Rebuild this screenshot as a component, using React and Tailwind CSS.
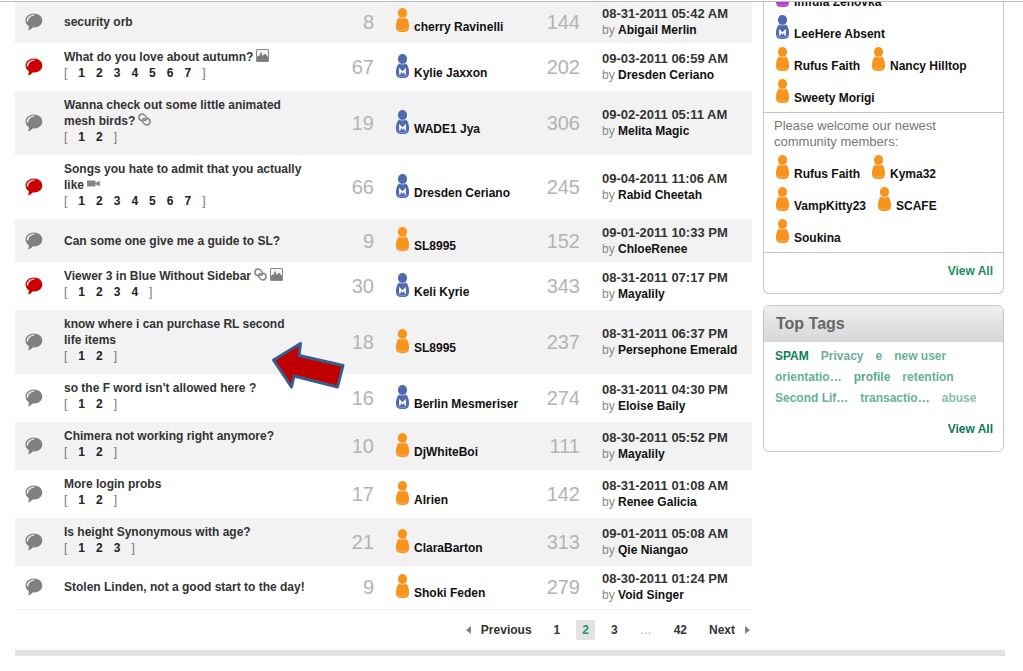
const TOPICS = [
  { title: 'security orb', replies: 8, author: 'cherry Ravinelli', views: 144, date: '08-31-2011 05:42 AM', by: 'Abigail Merlin' },
  { title: 'What do you love about autumn?', icons: ['image'], pages: 7, hot: true, replies: 67, author: 'Kylie Jaxxon', mod: true, views: 202, date: '09-03-2011 06:59 AM', by: 'Dresden Ceriano' },
  { title: 'Wanna check out some little animated mesh birds?', icons: ['link'], pages: 2, replies: 19, author: 'WADE1 Jya', mod: true, views: 306, date: '09-02-2011 05:11 AM', by: 'Melita Magic' },
  { title: 'Songs you hate to admit that you actually like', icons: ['video'], pages: 7, hot: true, replies: 66, author: 'Dresden Ceriano', mod: true, views: 245, date: '09-04-2011 11:06 AM', by: 'Rabid Cheetah' },
  { title: 'Can some one give me a guide to SL?', replies: 9, author: 'SL8995', views: 152, date: '09-01-2011 10:33 PM', by: 'ChloeRenee' },
  { title: 'Viewer 3 in Blue Without Sidebar', icons: ['link', 'image'], pages: 4, hot: true, replies: 30, author: 'Keli Kyrie', mod: true, views: 343, date: '08-31-2011 07:17 PM', by: 'Mayalily' },
  { title: 'know where i can purchase RL second life\u00a0items', pages: 2, replies: 18, author: 'SL8995', views: 237, date: '08-31-2011 06:37 PM', by: 'Persephone Emerald' },
  { title: "so the F word isn't allowed here ?", pages: 2, replies: 16, author: 'Berlin Mesmeriser', mod: true, views: 274, date: '08-31-2011 04:30 PM', by: 'Eloise Baily' },
  { title: 'Chimera not working right anymore?', pages: 2, replies: 10, author: 'DjWhiteBoi', views: 111, date: '08-30-2011 05:52 PM', by: 'Mayalily' },
  { title: 'More login probs', pages: 2, replies: 17, author: 'Alrien', views: 142, date: '08-31-2011 01:08 AM', by: 'Renee Galicia' },
  { title: 'Is height Synonymous with age?', pages: 3, replies: 21, author: 'ClaraBarton', views: 313, date: '09-01-2011 05:08 AM', by: 'Qie Niangao' },
  { title: 'Stolen Linden, not a good start to the day!', replies: 9, author: 'Shoki Feden', views: 279, date: '08-30-2011 01:24 PM', by: 'Void Singer' },
];

const ONLINE = [
  { name: 'Imfula Zenovka', color: '#b93cc0' },
  { name: 'LeeHere Absent', mod: true },
  { name: 'Rufus Faith' },
  { name: 'Nancy Hilltop' },
  { name: 'Sweety Morigi' },
];

const NEWEST = [
  { name: 'Rufus Faith' },
  { name: 'Kyma32' },
  { name: 'VampKitty23' },
  { name: 'SCAFE' },
  { name: 'Soukina' },
];

const TAGS = [
  { label: 'SPAM', tone: 'text-[#0f7f58]' },
  { label: 'Privacy', tone: 'text-[#66b096]' },
  { label: 'e', tone: 'text-[#66b096]' },
  { label: 'new user', tone: 'text-[#66b096]' },
  { label: 'orientatio…', tone: 'text-[#66b096]' },
  { label: 'profile', tone: 'text-[#5aa98d]' },
  { label: 'retention', tone: 'text-[#66b096]' },
  { label: 'Second Lif…', tone: 'text-[#66b096]' },
  { label: 'transactio…', tone: 'text-[#66b096]' },
  { label: 'abuse', tone: 'text-[#86c0ab]' },
];

const Bubble = ({ hot }) => (
  <svg width="18" height="18" viewBox="0 0 18 18" aria-label={hot ? 'Hot topic' : 'Topic'} className="block">
    <path
      d="M9 .6C13.800 .6 17.300 3.500 17.300 7.600S13.800 14.600 9.300 14.600C8.600 14.600 8 14.600 7.400 14.400 6.200 16.200 4.700 17 2.800 17.300 3.600 16.300 3.900 15 3.800 13.200 1.700 12 .5 10 .5 7.600.5 3.500 4.200.6 9 .6Z"
      fill={hot ? '#cc0000' : '#808080'}
    />
    <path d="M2 8.200C1.800 4.200 5 1.900 9.600 1.900 5.800 2.800 3.200 4.800 3 8.200Z" fill="#fff" stroke="#fff" strokeWidth=".4" />
  </svg>
);

const Person = ({ mod, color }) => {
  const fill = color || (mod ? '#4f69b0' : '#f7941d');
  const light = color ? '#d77fdb' : mod ? '#8b9cd0' : '#fbb562';
  return (
    <svg width="13" height="24" viewBox="0 0 13 24" aria-hidden="true" className="mb-[3px] block shrink-0">
      <path d="M3 9.500H10C12 11.500 13 14.500 13 18 13 22.500 11.800 24 6.500 24S0 22.500 0 18C0 14.500 1 11.500 3 9.500Z" fill={fill} />
      <ellipse cx="6.500" cy="5" rx="4.600" ry="5" fill={fill} />
      <path d="M2.500 8.800C4 10.800 9 10.800 10.500 8.800" fill="none" stroke="#fff" strokeOpacity=".55" strokeWidth=".9" />
      {mod ? (
        <>
          <path d="M1.500 20.500C2.500 23.500 10.500 23.500 11.500 20.500" fill="none" stroke={light} strokeWidth="1" />
          <path d="M3.900 20.500V15.800L6.500 18.600 9.100 15.800V20.500" fill="none" stroke="#fff" strokeWidth="1.600" />
        </>
      ) : (
        <path d="M2 21C3.500 22.800 9.500 22.800 11 21" fill="none" stroke={light} strokeWidth=".8" />
      )}
    </svg>
  );
};

const Attachment = ({ type }) => {
  if (type === 'image') {
    return (
      <svg width="13" height="13" viewBox="0 0 13 13" aria-label="Image" className="ml-[3px] inline-block align-[-1px]">
        <rect x=".5" y=".5" width="12" height="12" rx=".5" fill="#f4f4f4" stroke="#8a8a8a" />
        <path d="M1 12V8L2.500 6.500 3.500 7 4.500 3.500 5.500 3.500 6.500 7 8.500 5 9.500 5 12 8V12Z" fill="#7c7c7c" />
      </svg>
    );
  }
  if (type === 'link') {
    return (
      <svg width="13" height="13" viewBox="0 0 13 13" aria-label="Link" className="ml-[3px] inline-block align-[-1px]">
        <g fill="none" stroke="#858585" strokeWidth="1.600" strokeLinecap="round">
          <path d="M4.300 7.800C1.800 7.400.7 5.500 1 3.600 1.300 1.800 3.100.7 4.900 1.200 6.700 1.700 8.500 3.900 8.500 5.600 8.500 6.900 7.300 7.700 6.200 7.300" />
          <path d="M8.700 5.200C11.200 5.600 12.300 7.500 12 9.400 11.700 11.200 9.900 12.300 8.100 11.800 6.300 11.300 4.500 9.100 4.500 7.400 4.500 6.100 5.700 5.300 6.800 5.700" />
        </g>
      </svg>
    );
  }
  return (
    <svg width="13" height="7" viewBox="0 0 13 7" aria-label="Video" className="ml-[3px] inline-block align-[2px]">
      <path d="M0 .5H8.500V6.500H0ZM8.500 3 12.800.7V6.500L8.500 4.300Z" fill="#858585" />
    </svg>
  );
};

const Member = ({ name, mod, color }) => (
  <a href="#member" className="inline-flex items-end gap-[5px] align-middle text-[12px] leading-4 font-bold whitespace-nowrap text-[#111]">
    <Person mod={mod} color={color} />
    {name}
  </a>
);

const MemberList = ({ members }) => (
  <ul className="flex flex-wrap gap-x-3 pr-8 pl-0.5">
    {members.map((m) => (
      <li key={m.name} className="flex h-8 items-end">
        <Member {...m} />
      </li>
    ))}
  </ul>
);

const TopicRow = ({ topic }) => (
  <tr className="h-[43px] odd:bg-[#f2f2f2]">
    <td className="pl-2.5">
      <Bubble hot={topic.hot} />
    </td>
    <td className="py-1.5 text-[12px] leading-4 font-bold text-[#333]">
      <a href="#topic">{topic.title}</a>
      {topic.icons?.map((type) => <Attachment key={type} type={type} />)}
      {topic.pages && (
        <div className="flex gap-[11px] pb-1 text-[#222]">
          <span className="font-normal text-[#777]">[</span>
          {Array.from({ length: topic.pages }, (_, i) => (
            <a key={i} href="#page">{i + 1}</a>
          ))}
          <span className="font-normal text-[#777]">]</span>
        </div>
      )}
    </td>
    <td className="text-right text-[20px] leading-6 text-[#b3b3b3]">{topic.replies}</td>
    <td className="pl-[22px]">
      <Member name={topic.author} mod={topic.mod} />
    </td>
    <td className="text-right text-[20px] leading-6 text-[#b3b3b3]">{topic.views}</td>
    <td className="pl-[22px] leading-4 whitespace-nowrap">
      <div className="text-[13px] leading-4 font-bold text-[#333]">{topic.date}</div>
      <div className="text-[12px] leading-4 text-[#888]">
        by <a href="#member" className="font-bold text-[#111]">{topic.by}</a>
      </div>
    </td>
  </tr>
);

const Pagination = () => (
  <nav aria-label="Pages" className="flex justify-end gap-2.5 py-2.5 text-[12px] leading-5 font-bold text-[#333]">
    <a href="#prev" className="flex items-center gap-2.5 pr-1.5">
      <svg width="5" height="8" viewBox="0 0 5 8" aria-hidden="true"><path d="M5 0V8L0 4Z" fill="#808080" /></svg>
      Previous
    </a>
    <a href="#1" className="px-1.5">1</a>
    <a href="#2" aria-current="page" className="rounded-xs bg-[#e3e3e3] px-1.5 text-[#2e8f6c]">2</a>
    <a href="#3" className="px-1.5">3</a>
    <span className="px-1.5 font-normal text-[#aaa]">…</span>
    <a href="#42" className="px-1.5">42</a>
    <a href="#next" className="flex items-center gap-2.5 pr-0.5 pl-1.5">
      Next
      <svg width="5" height="8" viewBox="0 0 5 8" aria-hidden="true"><path d="M0 0V8L5 4Z" fill="#808080" /></svg>
    </a>
  </nav>
);

const Arrow = () => (
  <svg width="78" height="54" viewBox="0 0 78 54" aria-hidden="true" className="pointer-events-none absolute top-[338px] left-[269px]">
    <path
      d="M4.500 22 31.500 5.500 30 17.500 74 27.500 68.500 49 25 38 22.500 49Z"
      fill="#c00000"
      stroke="#385d8a"
      strokeWidth="3"
      strokeLinejoin="round"
    />
  </svg>
);

export default function App() {
  return (
    <div className="relative bg-white pt-px font-['Liberation_Sans',Arial,sans-serif]">
      <div className="flex items-start gap-[11px] overflow-hidden border-t border-[#b8bebe] pr-[19px] pl-[15px]">
        <main className="min-w-0 flex-1">
          <table aria-label="Topics" className="-mt-0.5 w-full table-fixed border-b border-[#f2f2f2]">
            <colgroup>
              <col className="w-[49px]" />
              <col />
              <col className="w-[64px]" />
              <col className="w-[160px]" />
              <col className="w-[46px]" />
              <col className="w-[172px]" />
            </colgroup>
            <tbody>
              {TOPICS.map((topic) => <TopicRow key={topic.title} topic={topic} />)}
            </tbody>
          </table>
          <Pagination />
        </main>

        <aside className="w-[241px] shrink-0">
          <section className="rounded-b-md border-x border-b border-[#c4c4c4]">
            <div className="-mt-6 border-b border-[#c4c4c4] pb-1.5 pl-2.5">
              <MemberList members={ONLINE} />
            </div>
            <div className="border-b border-[#c4c4c4] pt-[5px] pb-1.5 pl-2.5">
              <p className="pr-10 text-[13px] leading-4 text-[#777]">Please welcome our newest community members:</p>
              <MemberList members={NEWEST} />
            </div>
            <div className="pt-2.5 pr-2.5 pb-3.5 text-right text-[12px] leading-4 font-bold">
              <a href="#members" className="text-[#1f8a65]">View All</a>
            </div>
          </section>

          <section className="mt-[11px] overflow-hidden rounded-md border border-[#c4c4c4]">
            <h2 className="bg-linear-to-b from-[#efefef] to-[#d6d6d6] pl-3 text-[16px] leading-9 font-bold text-[#666]">Top Tags</h2>
            <div className="flex flex-wrap gap-x-3 pt-1 pr-4 pl-[11px] text-[12px] leading-[21px] font-bold">
              {TAGS.map((tag) => (
                <a key={tag.label} href="#tag" className={tag.tone}>{tag.label}</a>
              ))}
            </div>
            <div className="pt-3 pr-2.5 pb-3.5 text-right text-[12px] leading-4 font-bold">
              <a href="#tags" className="text-[#0c7a55]">View All</a>
            </div>
          </section>
        </aside>
      </div>
      <div className="mr-[18px] ml-[15px] h-1.5 bg-[#e3e3e3]" />
      <Arrow />
    </div>
  );
}
